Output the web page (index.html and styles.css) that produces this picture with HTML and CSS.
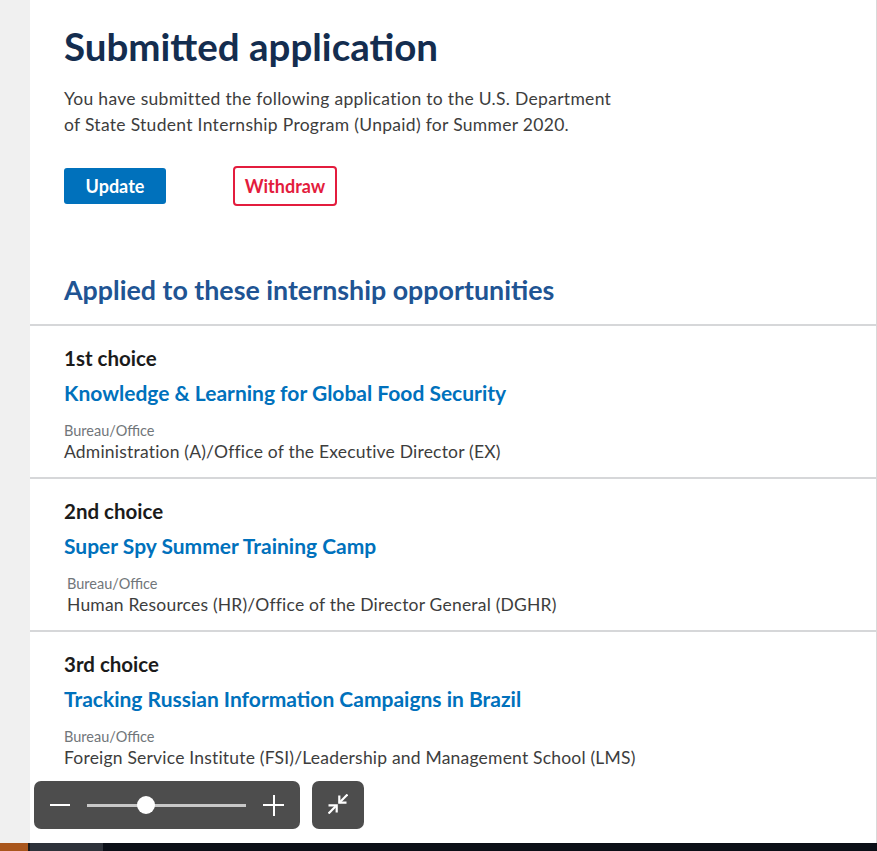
FILE: index.html
```html
<!DOCTYPE html>
<html lang="en">
<head>
    <meta charset="UTF-8">
    <meta name="viewport" content="width=device-width, initial-scale=1.0">
    <title>Submitted application</title>
    <link rel="stylesheet" href="styles.css">
</head>
<body>
    <div class="page">
        <div class="sidebar"></div>
        <main class="panel">
            <section class="intro">
                <h1>Submitted application</h1>
                <p>You have submitted the following application to the U.S. Department of State Student Internship Program (Unpaid) for Summer 2020.</p>
                <div class="actions">
                    <button class="btn btn-primary">Update</button>
                    <button class="btn btn-outline">Withdraw</button>
                </div>
            </section>

            <h2 class="section-title">Applied to these internship opportunities</h2>

            <ul class="choices">
                <li class="choice">
                    <div class="choice-rank">1st choice</div>
                    <a class="choice-title" href="#">Knowledge &amp; Learning for Global Food Security</a>
                    <div class="choice-label">Bureau/Office</div>
                    <div class="choice-value">Administration (A)/Office of the Executive Director (EX)</div>
                </li>
                <li class="choice">
                    <div class="choice-rank">2nd choice</div>
                    <a class="choice-title" href="#">Super Spy Summer Training Camp</a>
                    <div class="choice-label shifted">Bureau/Office</div>
                    <div class="choice-value shifted">Human Resources (HR)/Office of the Director General (DGHR)</div>
                </li>
                <li class="choice">
                    <div class="choice-rank">3rd choice</div>
                    <a class="choice-title" href="#">Tracking Russian Information Campaigns in Brazil</a>
                    <div class="choice-label">Bureau/Office</div>
                    <div class="choice-value">Foreign Service Institute (FSI)/Leadership and Management School (LMS)</div>
                </li>
            </ul>
        </main>
    </div>

    <div class="zoom-controls">
        <div class="zoom-slider">
            <span class="zoom-minus"></span>
            <span class="zoom-track"><span class="zoom-knob"></span></span>
            <span class="zoom-plus"></span>
        </div>
        <div class="zoom-collapse">
            <svg width="20" height="20" viewBox="0 0 20 20" fill="none" stroke="#fff" stroke-width="2.2">
                <path d="M19.5 0.5 L11.3 8.7"/>
                <path d="M11.3 1.5 V8.7 H18.5"/>
                <path d="M0.5 19.5 L7.7 12.3"/>
                <path d="M0.5 11.3 H8.7 V18.5"/>
            </svg>
        </div>
    </div>

    <div class="taskbar">
        <span class="task-orange"></span>
        <span class="task-gap"></span>
        <span class="task-dark"></span>
    </div>
</body>
</html>
```

FILE: styles.css
```css
:root {
    --navy: #142d4f;
    --blue: #205493;
    --link: #0071bc;
    --red: #e31c3d;
    --text: #3d3d3d;
    --muted: #71767a;
    --rule: #d6d7d9;
}

* {
    margin: 0;
    padding: 0;
    box-sizing: border-box;
}

body {
    font-family: 'Lato', 'Liberation Sans', sans-serif;
    background: #f0f0f0;
    color: var(--text);
    height: 851px;
    overflow: hidden;
}

.page {
    display: flex;
    height: 843px;
}

.sidebar {
    width: 30px;
    flex-shrink: 0;
    background: #f0f0f0;
}

.panel {
    width: 847px;
    background: #fff;
    border-right: 1px solid #d9d9d9;
}

.intro {
    padding: 24px 34px 0;
}

h1 {
    font-size: 38.5px;
    font-weight: 700;
    color: var(--navy);
    line-height: 44px;
}

.intro p {
    margin-top: 18px;
    width: 560px;
    font-size: 17.5px;
    letter-spacing: 0.3px;
    line-height: 26px;
}

.actions {
    display: flex;
    align-items: center;
    gap: 67px;
    margin-top: 28px;
}

.btn {
    font-family: inherit;
    font-size: 18px;
    font-weight: 700;
    border-radius: 4px;
    cursor: pointer;
}

.btn-primary {
    background: var(--link);
    color: #fff;
    border: none;
    width: 102px;
    height: 36px;
    border-radius: 3px;
}

.btn-outline {
    background: #fff;
    color: var(--red);
    border: 2px solid var(--red);
    width: 104px;
    height: 40px;
}

.section-title {
    font-size: 26.8px;
    font-weight: 700;
    color: var(--blue);
    line-height: 30px;
    padding: 69px 34px 19px;
}

.choices {
    list-style: none;
}

.choice {
    border-top: 2px solid var(--rule);
    padding: 19px 34px 17px;
    height: 153px;
}

.choice-rank {
    font-size: 20.5px;
    font-weight: 700;
    color: #1b1b1b;
    line-height: 26px;
}

.choice-title {
    display: block;
    margin-top: 8px;
    font-size: 21px;
    font-weight: 700;
    color: var(--link);
    text-decoration: none;
    line-height: 28px;
}

.choice-label {
    margin-top: 15px;
    font-size: 14.5px;
    color: var(--muted);
    line-height: 18px;
}

.choice-value {
    font-size: 17.5px;
    letter-spacing: 0.2px;
    line-height: 24px;
}

.shifted {
    margin-left: 3px;
}

.zoom-controls {
    position: absolute;
    left: 34px;
    top: 781px;
    display: flex;
    gap: 12px;
}

.zoom-slider {
    width: 266px;
    height: 48px;
    background: #4d4d4d;
    border-radius: 7px;
    display: flex;
    align-items: center;
    padding: 0 16px;
}

.zoom-minus {
    width: 20px;
    height: 2px;
    background: #fff;
}

.zoom-track {
    position: relative;
    width: 160px;
    height: 3px;
    margin: 0 17px;
    background: #c8c8c8;
}

.zoom-knob {
    position: absolute;
    left: 50px;
    top: -8px;
    width: 18px;
    height: 18px;
    border-radius: 50%;
    background: #fff;
}

.zoom-plus {
    position: relative;
    width: 21px;
    height: 21px;
}

.zoom-plus::before,
.zoom-plus::after {
    content: "";
    position: absolute;
    background: #fff;
}

.zoom-plus::before {
    left: 0;
    top: 9px;
    width: 21px;
    height: 2px;
}

.zoom-plus::after {
    left: 10px;
    top: 0;
    width: 2px;
    height: 21px;
}

.zoom-collapse {
    width: 52px;
    height: 48px;
    background: #4d4d4d;
    border-radius: 7px;
    display: flex;
    align-items: center;
    justify-content: center;
    padding-bottom: 3px;
}

.taskbar {
    display: flex;
    height: 8px;
    background: #0b0f17;
}

.task-orange {
    width: 28px;
    background: #a9561c;
}

.task-gap {
    width: 2px;
    background: #1a1a1a;
}

.task-dark {
    width: 73px;
    background: #2e323a;
}
```
